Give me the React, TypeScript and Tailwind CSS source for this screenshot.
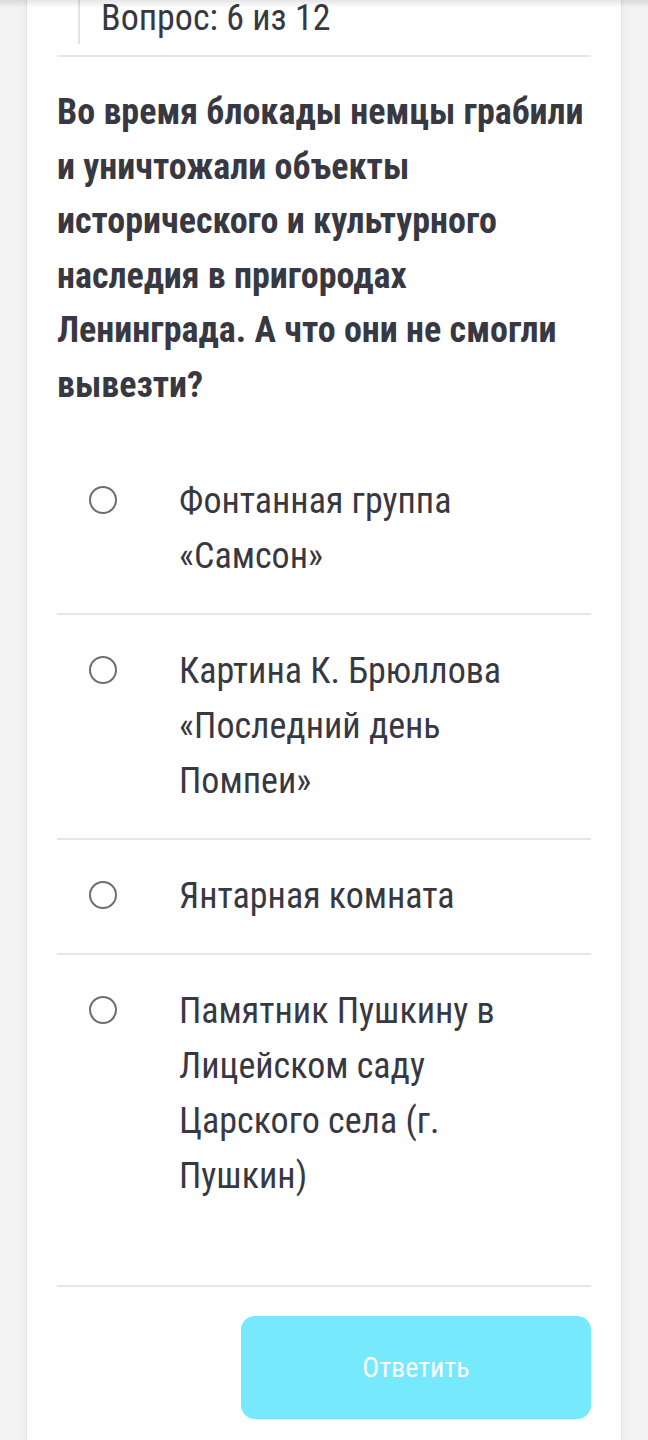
const options = [
  "Фонтанная группа «Самсон»",
  "Картина К. Брюллова «Последний день Помпеи»",
  "Янтарная комната",
  "Памятник Пушкину в Лицейском саду Царского села (г. Пушкин)",
];

function Radio() {
  return (
    <span className="mt-[12px] ml-[32px] block h-[28px] w-[28px] shrink-0 rounded-full border-2 border-[#6e6e6e] bg-white" />
  );
}

export default function App() {
  return (
    <div className="relative min-h-[1440px] bg-[#f3f3f3] font-['Roboto_Condensed','Liberation_Sans_Narrow','DejaVu_Sans_Condensed',Roboto,sans-serif] text-[#383842]">
      <div className="pointer-events-none absolute inset-x-0 top-0 z-10 h-[8px] bg-gradient-to-b from-black/10 to-transparent" />
      <div className="mx-[26px] min-h-[1440px] border-x border-[#e2e2e2] bg-white px-[30px] shadow-[0_0_6px_rgba(0,0,0,0.06)]">
        <div className="flex h-[44px] pl-[21px]">
          <div className="w-[2px] bg-[#e2e2e2]" />
          <span className="ml-[21px] -mt-[2px] text-[36px] leading-[40px]">Вопрос: 6 из 12</span>
        </div>
        <div className="mt-[11px] h-[2px] bg-[#e6e6e6]" />

        <h2 className="pt-[28px] text-[36px] font-bold leading-[54.5px]">
          Во время блокады немцы грабили и уничтожали объекты исторического и культурного наследия в
          пригородах Ленинграда. А что они не смогли вывезти?
        </h2>

        <ul className="mt-[33px]">
          {options.map((o, i) => (
            <li key={i}>
              {i > 0 && <div className="h-[2px] bg-[#e6e6e6]" />}
              <label className="flex items-start py-[29px]">
                <Radio />
                <span className="ml-[62px] pr-[46px] text-[36px] leading-[55px]">{o}</span>
              </label>
            </li>
          ))}
        </ul>

        <div className="mt-[52px] h-[2px] bg-[#e6e6e6]" />
        <div className="flex justify-end pt-[29px]">
          <button className="h-[103px] w-[350px] rounded-[14px] bg-[#77e9fc] text-[28px] text-white">
            Ответить
          </button>
        </div>
      </div>
    </div>
  );
}
